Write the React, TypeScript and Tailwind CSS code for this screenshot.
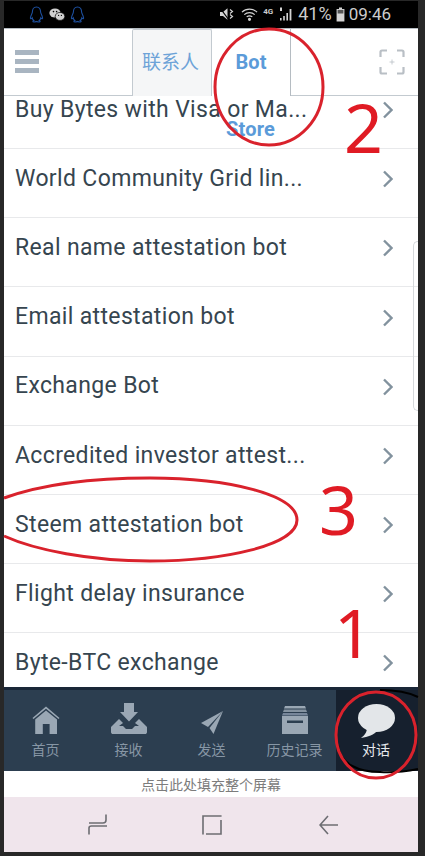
const rows = [
  "Buy Bytes with Visa or Ma...",
  "World Community Grid lin...",
  "Real name attestation bot",
  "Email attestation bot",
  "Exchange Bot",
  "Accredited investor attest...",
  "Steem attestation bot",
  "Flight delay insurance",
  "Byte-BTC exchange",
];

function Chevron() {
  return (
    <svg width="10" height="18" viewBox="0 0 10 18" fill="none" className="shrink-0">
      <path d="M1 1.5 L8.5 9 L1 16.5" stroke="#82929e" strokeWidth="2.4" />
    </svg>
  );
}

function Penguin() {
  return (
    <svg width="15" height="17" viewBox="0 0 15 17" fill="none" stroke="#1d4f9e" strokeWidth="1.1">
      <path d="M7.5 1 C4.5 1 3.4 3.4 3.4 6 C3.4 7.5 1.4 9.8 1.4 12 C1.4 13.2 2.4 12.8 3.2 11.8 C3.4 13 4 13.8 4.8 14.4 C3.6 14.8 3.4 16 5 16 C6.2 16 7 15.6 7.5 15.4 C8 15.6 8.8 16 10 16 C11.6 16 11.4 14.8 10.2 14.4 C11 13.8 11.6 13 11.8 11.8 C12.6 12.8 13.6 13.2 13.6 12 C13.6 9.8 11.6 7.5 11.6 6 C11.6 3.4 10.5 1 7.5 1 Z" />
    </svg>
  );
}

function StatusBar() {
  return (
    <div className="flex h-[27px] items-center justify-between bg-black pl-[25px] pr-[27px]">
      <div className="flex items-center gap-[5px]">
        <Penguin />
        <svg width="16" height="13" viewBox="0 0 16 13" fill="#cfcfcf">
          <ellipse cx="6" cy="5" rx="5.6" ry="4.6" />
          <ellipse cx="11" cy="8.4" rx="4.8" ry="4" stroke="#000" strokeWidth="0.7" />
          <circle cx="4.5" cy="3.6" r="0.8" fill="#000" />
          <circle cx="7.6" cy="3.6" r="0.8" fill="#000" />
          <circle cx="9.6" cy="7.4" r="0.6" fill="#000" />
          <circle cx="12.4" cy="7.4" r="0.6" fill="#000" />
        </svg>
        <Penguin />
      </div>
      <div className="flex items-center text-[#cccccc]">
        <svg width="16" height="14" viewBox="0 0 16 14" fill="#d4d4d4" className="mr-[6px]">
          <path d="M1 5 H4 L8.5 1.2 V12.8 L4 9 H1 Z" />
          <path d="M1 1 L10 13" stroke="#000" strokeWidth="1.2" />
          <path d="M11 2.5 L13.5 4.5 L11 6.5 M11 7.5 L13.5 9.5 L11 11.5" stroke="#d4d4d4" strokeWidth="1.2" fill="none" />
        </svg>
        <svg width="17" height="15" viewBox="0 0 18 15" fill="none" stroke="#d4d4d4" strokeWidth="1.3" className="mr-[5px]">
          <path d="M1 5 C5.5 0.8 12.5 0.8 17 5" />
          <path d="M3.5 7.6 C6.5 4.8 11.5 4.8 14.5 7.6" />
          <path d="M6 10 C7.8 8.6 10.2 8.6 12 10" />
          <circle cx="9" cy="12.6" r="1" fill="#d4d4d4" />
        </svg>
        <span className="mb-[5px] mr-[6px] font-['Roboto',sans-serif] text-[8px] font-bold leading-none">4G</span>
        <svg width="14" height="14" viewBox="0 0 14 14" fill="#d4d4d4" className="mr-[5px]">
          <path d="M1 0.5 H3 V4 H1 Z" />
          <path d="M1 11 H2.6 V13.5 H1 Z M4.2 9 H5.8 V13.5 H4.2 Z M7.4 6 H9 V13.5 H7.4 Z M10.6 2 H12.4 V13.5 H10.6 Z" />
        </svg>
        <span className="font-['Roboto',sans-serif] text-[18px] leading-none">41%</span>
        <svg width="9" height="15" viewBox="0 0 9 14" fill="#d4d4d4" className="ml-[4px] mr-[4px]">
          <path d="M3 0 H6 V1.4 H8.4 V14 H0.6 V1.4 H3 Z" />
          <path d="M1.6 2.4 H7.4 V6 H1.6 Z" fill="#555" />
        </svg>
        <span className="font-['Roboto',sans-serif] text-[17px] leading-none">09:46</span>
      </div>
    </div>
  );
}

function Header() {
  return (
    <div className="flex h-[68px] items-stretch border-b border-t border-b-[#c3cad0] border-t-[#b5bcc2] bg-white">
      <div className="flex w-[128px] items-center pl-[11px]">
        <div className="flex w-[24px] flex-col gap-[4px]">
          <div className="h-[5px] bg-[#a9b5c1]" />
          <div className="h-[5px] bg-[#a9b5c1]" />
          <div className="h-[5px] bg-[#a9b5c1]" />
        </div>
      </div>
      <div className="mb-[-1px] flex w-[80px] items-center justify-center rounded-t-[2px] border border-b-0 border-[#c3cad0] bg-[#f5f6f7] pb-[3px] pr-[3px] font-['Noto_Sans_CJK_SC',sans-serif] text-[19px] text-[#6da3d8]">
        联系人
      </div>
      <div className="mb-[-1px] flex w-[79px] justify-center border-r border-[#b5bcc2] bg-white pt-[20px] font-['Roboto',sans-serif] text-[20px] font-bold leading-[26px] text-[#5b9bd9]">
        Bot
      </div>
      <div className="flex flex-1 items-center justify-end pr-[13px]">
        <svg width="26" height="26" viewBox="0 0 26 26" fill="none" stroke="#b9bfc5" strokeWidth="2.2">
          <path d="M1.5 8 V3 Q1.5 1.5 3 1.5 H8 M18 1.5 H23 Q24.5 1.5 24.5 3 V8 M24.5 18 V23 Q24.5 24.5 23 24.5 H18 M8 24.5 H3 Q1.5 24.5 1.5 23 V18" />
          <path d="M13 10.5 V15.5 M10.5 13 H15.5" strokeWidth="0.8" />
        </svg>
      </div>
    </div>
  );
}

const tabs = [
  {
    label: "首页",
    icon: (
      <svg width="28" height="28" viewBox="0 0 28 28" fill="#9aa7b4">
        <path d="M1 12.5 L14 1.6 L27 12.5" fill="none" stroke="#9aa7b4" strokeWidth="1.6" />
        <path d="M14 4.6 L3.2 13.6 V28 H10.8 V18 H17.6 V28 H25 V13.6 Z" />
      </svg>
    ),
  },
  {
    label: "接收",
    icon: (
      <svg width="36" height="31" viewBox="0 0 36 31" fill="#9aa7b4">
        <path d="M13 0 H23 V9 H27 L18 18.5 L9 9 H13 Z" />
        <path d="M8 16 L0 24 V29 C0 30.5 1 31 2 31 H34 C35 31 36 30.5 36 29 V24 L28 16 L24 20 L28 23 H24 L21 26 H15 L12 23 H8 L12 20 Z" />
      </svg>
    ),
  },
  {
    label: "发送",
    icon: (
      <svg width="24" height="24" viewBox="0 0 24 24" fill="#9aa7b4">
        <path d="M23 1 L1 13 L8 17 Z" />
        <path d="M23 1 L9.5 18 L13.5 24 Z" />
      </svg>
    ),
  },
  {
    label: "历史记录",
    icon: (
      <svg width="26" height="28" viewBox="0 0 26 28" fill="#9aa7b4">
        <path d="M3 0 H23 L24 2.5 H2 Z" />
        <path d="M2 3.6 H24 L25 6 H1 Z" fill="#8492a0" />
        <path d="M1 7 H25 L26 9.5 H0 Z" fill="#77869a" />
        <path fillRule="evenodd" d="M0 10 H26 V28 H0 Z M5 14.4 V17 H21 V14.4 Z" />
      </svg>
    ),
  },
];

function BottomTabs() {
  return (
    <div className="flex h-[84px] border-t-[3px] border-t-[#1a2738] bg-[#2c3e50]">
      {tabs.map((t) => (
        <div key={t.label} className="flex w-[83px] flex-col items-center justify-end pb-[13px]">
          <div className="flex h-[33px] items-end pb-[2px]">{t.icon}</div>
          <span className="mt-[4px] font-['Noto_Sans_CJK_SC',sans-serif] text-[14px] leading-[18px] text-[#8796a5]">
            {t.label}
          </span>
        </div>
      ))}
      <div className="flex flex-1 flex-col items-center justify-end bg-[#16202e] pb-[13px] pr-[2px]">
        <svg width="38" height="34" viewBox="0 0 38 34" fill="#e3e6e9">
          <ellipse cx="19.5" cy="14" rx="18.5" ry="14" />
          <path d="M10 23 C10 28 8 31 4 34 C11 33 17 31 21 26 Z" />
        </svg>
        <span className="mt-[2px] font-['Noto_Sans_CJK_SC',sans-serif] text-[14px] leading-[18px] text-[#e6e9ec]">
          对话
        </span>
      </div>
    </div>
  );
}

function NavBar() {
  return (
    <div className="flex h-[55px] items-center justify-between bg-[#f0e5ec] pl-[84px] pr-[80px]">
      <svg width="20" height="21" viewBox="0 0 20 21" fill="none" stroke="#6d6d72" strokeWidth="1.6">
        <path d="M18 0.5 V6 C18 8 17 9 15 9 H1" />
        <path d="M1 20.5 V14 C1 12.8 2 12 3.4 12 H19" />
      </svg>
      <svg width="20" height="20" viewBox="0 0 20 20" fill="none" stroke="#6d6d72" strokeWidth="1.6" className="mr-[4px]">
        <path d="M19 1 H1 V19" strokeLinecap="round" />
        <path d="M4 19 H19 V5" />
      </svg>
      <svg width="19" height="20" viewBox="0 0 19 20" fill="none" stroke="#6d6d72" strokeWidth="1.6">
        <path d="M19 10 H1 M9 1 L1 10 L9 19" />
      </svg>
    </div>
  );
}

export default function App() {
  return (
    <div className="relative h-[856px] w-[425px] overflow-hidden bg-[#282828] pb-[4px] pl-[4px] pr-[7px] pt-[1px]">
      <div className="flex h-full flex-col">
        <StatusBar />
        <Header />
        <div className="relative flex h-[592px] flex-col overflow-hidden bg-white">
          <div className="mt-[-16px] flex flex-col">
            {rows.map((r) => (
              <div
                key={r}
                className="flex h-[69.2px] shrink-0 items-center justify-between border-b border-[#e8e9eb] pb-[8px] pl-[11px] pr-[25px] font-['Roboto',sans-serif] text-[23px] tracking-[0.35px] text-[#36454f]"
              >
                <span>{r}</span>
                <Chevron />
              </div>
            ))}
          </div>
          {/* edge panel handle */}
          <div className="absolute right-0 top-[145px] h-[170px] w-[5px] rounded-l-[5px] border border-r-0 border-[#d5d8db]" />
        </div>
        <BottomTabs />
        <div className="flex h-[26px] items-center justify-center bg-white font-['Noto_Sans_CJK_SC',sans-serif] text-[14px] text-[#7c7c7c]">
          点击此处填充整个屏幕
        </div>
        <NavBar />
      </div>

      {/* blue label that overlaps the first row */}
      <span className="absolute left-[226px] top-[117px] font-['Roboto',sans-serif] text-[20px] font-bold leading-[24px] tracking-[0.2px] text-[#5b9bd9]">
        Store
      </span>

      {/* hand-drawn annotations on top of the screenshot */}
      <svg width="425" height="856" className="pointer-events-none absolute left-0 top-0" fill="none">
        <path d="M338 745 C340 765 360 772 380 772 C395 773 408 771 418 769" stroke="#000" strokeWidth="2" />
        <path d="M380 690 C395 690 408 692 418 697" stroke="#000" strokeWidth="2" />
        <g stroke="#d9222c" strokeWidth="3">
          <ellipse cx="269" cy="87" rx="54" ry="58" />
          <path d="M4 498 C40 485 90 478 150 478 C230 478 297 495 297 520 C297 545 225 561 150 561 C90 561 35 550 4 536" />
          <ellipse cx="376" cy="735" rx="40" ry="43" />
        </g>
      </svg>
      <span className="absolute left-[344px] top-[89px] font-['Noto_Sans',sans-serif] text-[68px] leading-[76px] text-[#e01b24]">2</span>
      <span className="absolute left-[319px] top-[471px] font-['Noto_Sans',sans-serif] text-[68px] leading-[76px] text-[#e01b24]">3</span>
      <span className="absolute left-[334px] top-[594px] font-['Noto_Sans',sans-serif] text-[68px] leading-[76px] text-[#e01b24]">1</span>
    </div>
  );
}
